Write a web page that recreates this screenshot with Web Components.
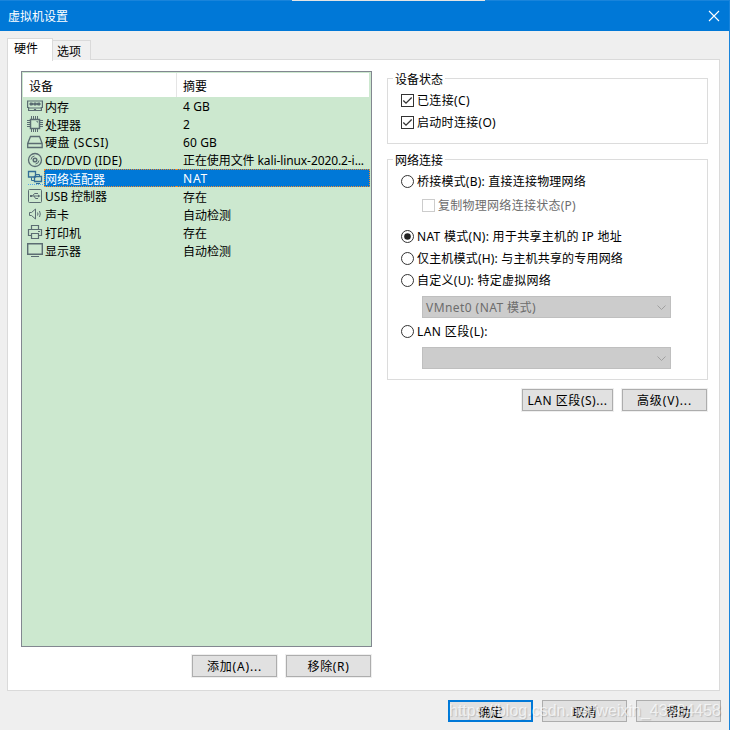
<!DOCTYPE html>
<html lang="zh-CN">
<head>
<meta charset="utf-8">
<title>虚拟机设置</title>
<style>
html,body{margin:0;padding:0}
body{width:730px;height:730px;overflow:hidden;font:12px/18px "Noto Sans","Noto Sans CJK SC",sans-serif;color:#000}
</style>
</head>
<body>
<vm-dialog></vm-dialog>
<script>
const define=(name,html,setup)=>{
  const t=document.createElement('template');
  t.innerHTML='<style>*{box-sizing:border-box}:host{box-sizing:border-box}</style>'+html;
  customElements.define(name,class extends HTMLElement{
    connectedCallback(){
      if(this.shadowRoot)return;
      this.attachShadow({mode:'open'}).append(t.content.cloneNode(true));
      if(setup)setup(this,this.shadowRoot);
    }
  });
};

// Label whose advance is spread over the width given in "w"; purely Chinese labels sit one pixel lower.
define('ui-text',`<style>:host{display:inline-block;white-space:pre;line-height:18px;flex:none}span{display:inline-block}.c{transform:translateY(1px)}</style><span><slot></slot></span>`,(el,r)=>{
  const w=+el.getAttribute('w'),s=r.querySelector('span'),n=el.textContent.length;
  if(!/[ -~]/.test(el.textContent))s.className='c';
  if(w)s.style.letterSpacing=((w-s.getBoundingClientRect().width)/n)+'px';
});

const ICONS={
  memory:'<path d="M.6 3h14.800v6.500h-1v3H8.500v-1H7.500v1H1.600v-3h-1z" stroke-width="1.200"/><path d="M3 5h2.500v2H3zM6.800 5h2.500v2H6.800zM10.500 5H13v2h-2.500z" fill="#5b6c72"/><path d="M2 10h12"/>',
  cpu:'<path d="M3.500 3.500h9v9h-9z" stroke-width="1.500"/><path d="M4.500 0v3m2-3v3m2-3v3m2-3v3M4.500 13v3m2-3v3m2-3v3m2-3v3M0 4.500h3m-3 2h3m-3 2h3m-3 2h3M13 4.500h3m-3 2h3m-3 2h3m-3 2h3"/><path d="M9.500 5.500h1v1"/>',
  disk:'<path d="M3.500 2.500h9l2.700 7v4H.7v-4zM1 9.500h14" stroke-width="1.300"/>',
  cd:'<circle cx="8" cy="8" r="6.500" stroke-width="1.300"/><circle cx="8" cy="8" r="1.800" stroke-width="1.500"/><path d="M4 7.500a4 4 0 0 1 3.500-3.500M12 8.500a4 4 0 0 1-3.500 3.500"/>',
  net:'<path d="M1.500 1.500h7v5.500h-7zM7.500 6.500h7v5h-7z" stroke="#326d96" stroke-width="1.300"/><path d="M4.500 7.500v3H7M9 4.500h3.500V6M9 13.500h4" stroke="#326d96"/><path d="M1 14.500h15" stroke="#58a8e8" stroke-dasharray="1 1"/>',
  usb:'<rect x="1.500" y="1.500" width="13" height="13" rx="1"/><path d="M3 8h9M5.500 8l2-2.500H10M7 8l1.500 2.500H10"/><path d="M11 6.500 13.500 8 11 9.500zM3 7h2v2H3zM10 5h1v1h-1zM9.500 10h1.500v1H9.500z" fill="#5b6c72" stroke="none"/>',
  sound:'<path d="M2.500 6.500h2L8.500 3v10l-4-3.500h-2zM10.500 6.500q1 1.500 0 3M12.500 5q1.500 3 0 6"/>',
  print:'<path d="M4.500 5.500v-4h7v4M4.500 11.500h-3v-6h13v6h-3M4.500 9.500h7v5h-7z" stroke-width="1.200"/><path d="M11 7.500h2"/>',
  display:'<path d="M.7 1.700h14.600v10.600H.7z" stroke-width="1.400"/><path d="M4 14.500h8"/>'
};
define('ui-icon',`<style>:host{display:block;width:16px;height:16px;flex:none}svg{display:block;fill:none;stroke:#5b6c72}</style><svg width="16" height="16" viewBox="0 0 16 16"></svg>`,(el,r)=>{
  r.querySelector('svg').innerHTML=ICONS[el.getAttribute('name')];
});

define('title-bar',`<style>
:host{display:flex;height:31px;background:#0078d7;color:#fff;justify-content:space-between;align-items:center;padding:0 10px 0 8px;
background-image:linear-gradient(#e4e4e4,#e4e4e4),linear-gradient(#1984db,#1984db);background-size:193px 1px,100% 1px;background-position:292px 0,0 0;background-repeat:no-repeat}
svg{display:block}</style><slot></slot><svg width="12" height="12" viewBox="0 0 12 12" fill="none" stroke="#fff" stroke-width="1.100"><path d="M1 1l10 10M11 1 1 11"/></svg>`);

define('ui-tabs',`<style>
:host{display:flex;align-items:flex-end;height:22px;margin-left:7px}
div{border:1px solid #dadada;border-bottom:0}
.a{width:46px;height:23px;background:#fff;padding:0 0 0 6px;margin-bottom:-1px;z-index:1}
.b{width:38px;height:20px;background:#f0f0f0;padding:1px 0 0 4px;border-left:0}
</style><div class="a"><ui-text w="24">硬件</ui-text></div><div class="b"><ui-text w="24">选项</ui-text></div>`);

define('ui-button',`<style>
:host{display:flex;height:22px;width:85px;flex:none;border:1px solid #adadad;background:#e1e1e1;align-items:center;justify-content:center;padding-top:1px;box-shadow:0 0 0 1px #efefef}
:host([primary]){border:2px solid #0078d7}
</style><slot></slot>`);

define('device-row',`<style>
:host{display:flex;height:18px}
.n{display:flex;width:153px;padding-left:4px;flex:none}
.l{flex:1;padding-left:2px;height:18px;display:flex;padding-top:1px}
.s{flex:1;padding:1px 0 0 7px}
ui-icon{margin-top:1px}
:host([selected]) .l,:host([selected]) .s{background:#0078d7;color:#fff;border:1px dotted #ef8a2b;padding-top:0}
:host([selected]) .l{border-right:0;padding-left:0;margin-left:1px}
:host([selected]) .s{border-left:0}
</style><div class="n"><ui-icon></ui-icon><div class="l"><slot name="name"></slot></div></div><div class="s"><slot></slot></div>`,(el,r)=>{
  const o=r.querySelector('ui-icon'),i=document.createElement('ui-icon');
  i.setAttribute('name',el.getAttribute('icon'));o.replaceWith(i);
});

define('device-list',`<style>
:host{display:block;width:351px;height:576px;border:1px solid #828790;background:#cce8cf;padding:1px}
.h{display:flex;height:24px;background:#fff;margin-right:1px}
.h div{padding:4px 0 0 6px}
.h .a{width:154px;border-right:1px solid #e5e5e5}
</style><div class="h"><div class="a"><ui-text w="24">设备</ui-text></div><div><ui-text w="24">摘要</ui-text></div></div><div class="rows"><slot></slot></div>`);

define('group-box',`<style>
:host{display:block;position:relative;border:1px solid #dcdcdc;width:321px}
.t{position:absolute;left:5px;top:-9px;background:#fff;padding:0 2px}
</style><div class="t"><slot name="title"></slot></div><slot></slot>`);

define('ui-option',`<style>
:host{display:flex;height:18px;align-items:flex-start}
svg{flex:none;display:block;margin:2px 3px 0 0}
:host([disabled]){color:#6d6d6d}
</style><svg width="13" height="13" viewBox="0 0 13 13" fill="none"></svg><slot></slot>`,(el,r)=>{
  const s=r.querySelector('svg'),c=el.hasAttribute('disabled')?'#ccc':'#333',on=el.hasAttribute('on');
  s.innerHTML=el.hasAttribute('radio')
   ?`<circle cx="6.500" cy="6.500" r="6" stroke="${c}" fill="#fff"/>`+(on?'<circle cx="6.500" cy="6.500" r="3.300" fill="#222"/>':'')
   :`<rect x=".5" y=".5" width="12" height="12" stroke="${c}" fill="#fff"/>`+(on?'<path d="M2.300 6.500 5 9.200 10.700 3.500" stroke="#333" stroke-width="1.300"/>':'');
});

define('ui-combo',`<style>
:host{display:flex;width:249px;height:22px;border:1px solid #bfbfbf;background:#ccc;color:#6d6d6d;align-items:center;justify-content:space-between;padding:2px 4px 0 3px}
svg{display:block;margin-left:auto;margin-top:-1px}
</style><slot></slot><svg width="9" height="6" viewBox="0 0 9 6" fill="none" stroke="#a0a0a0"><path d="M.5.500l4 4 4-4"/></svg>`);

define('vm-dialog',`<style>
:host{display:block;position:relative;width:730px;height:730px;background:#efefef;border-right:1px solid #1984db;overflow:hidden}
title-bar{margin-right:-1px}
ui-tabs{margin-top:7px;position:relative;z-index:1}
.page{display:flex;height:632px;margin:-1px 9px 0 7px;background:#fff;border:1px solid #dadada;padding:11px 11px 0 13px;gap:15px}
.lb,.rb,.foot{display:flex;justify-content:flex-end;gap:9px}
.lb{margin:8px 1px 0 0}
.right{padding-top:7px}
.g1{height:66px;margin-bottom:15px}
.g2{height:221px}
.rb{margin:9px 1px 0 0}
.foot{padding:9px 8px 0 0}
.wm{position:absolute;left:449px;top:700px;font:16px/22px "Liberation Sans",sans-serif;color:rgba(255,255,255,.68);text-shadow:1px 1px 1px rgba(0,0,0,.16)}
</style>
<title-bar><ui-text w="60">虚拟机设置</ui-text></title-bar>
<ui-tabs></ui-tabs>
<div class="page">
 <div>
  <device-list>
   <device-row icon="memory"><ui-text slot="name" w="24">内存</ui-text><ui-text w="27">4 GB</ui-text></device-row>
   <device-row icon="cpu"><ui-text slot="name" w="36">处理器</ui-text><ui-text>2</ui-text></device-row>
   <device-row icon="disk"><ui-text slot="name" w="64">硬盘 (SCSI)</ui-text><ui-text w="34">60 GB</ui-text></device-row>
   <device-row icon="cd"><ui-text slot="name" w="77">CD/DVD (IDE)</ui-text><ui-text w="181">正在使用文件 kali-linux-2020.2-i...</ui-text></device-row>
   <device-row icon="net" selected><ui-text slot="name" w="60">网络适配器</ui-text><ui-text w="25">NAT</ui-text></device-row>
   <device-row icon="usb"><ui-text slot="name" w="62">USB 控制器</ui-text><ui-text w="24">存在</ui-text></device-row>
   <device-row icon="sound"><ui-text slot="name" w="24">声卡</ui-text><ui-text w="48">自动检测</ui-text></device-row>
   <device-row icon="print"><ui-text slot="name" w="36">打印机</ui-text><ui-text w="24">存在</ui-text></device-row>
   <device-row icon="display"><ui-text slot="name" w="36">显示器</ui-text><ui-text w="48">自动检测</ui-text></device-row>
  </device-list>
  <div class="lb"><ui-button><ui-text w="55">添加(A)...</ui-text></ui-button><ui-button><ui-text w="42">移除(R)</ui-text></ui-button></div>
 </div>
 <div class="right">
  <group-box class="g1"><ui-text slot="title" w="48">设备状态</ui-text>
   <ui-option on style="margin:13px 0 0 13px"><ui-text w="53">已连接(C)</ui-text></ui-option>
   <ui-option on style="margin:4px 0 0 13px"><ui-text w="79">启动时连接(O)</ui-text></ui-option>
  </group-box>
  <group-box class="g2"><ui-text slot="title" w="48">网络连接</ui-text>
   <ui-option radio style="margin:13px 0 0 13px"><ui-text w="169">桥接模式(B): 直接连接物理网络</ui-text></ui-option>
   <ui-option disabled style="margin:6px 0 0 34px"><ui-text w="138">复制物理网络连接状态(P)</ui-text></ui-option>
   <ui-option radio on style="margin:13px 0 0 13px"><ui-text w="205">NAT 模式(N): 用于共享主机的 IP 地址</ui-text></ui-option>
   <ui-option radio style="margin:4px 0 0 13px"><ui-text w="206">仅主机模式(H): 与主机共享的专用网络</ui-text></ui-option>
   <ui-option radio style="margin:4px 0 0 13px"><ui-text w="134">自定义(U): 特定虚拟网络</ui-text></ui-option>
   <ui-combo style="margin:6px 0 0 34px"><ui-text w="110">VMnet0 (NAT 模式)</ui-text></ui-combo>
   <ui-option radio style="margin:5px 0 0 13px"><ui-text w="71">LAN 区段(L):</ui-text></ui-option>
   <ui-combo style="margin:6px 0 0 34px"></ui-combo>
  </group-box>
  <div class="rb"><ui-button style="width:91px"><ui-text w="80">LAN 区段(S)...</ui-text></ui-button><ui-button><ui-text w="55">高级(V)...</ui-text></ui-button></div>
 </div>
</div>
<div class="foot"><ui-button primary><ui-text w="24">确定</ui-text></ui-button><ui-button><ui-text w="24">取消</ui-text></ui-button><ui-button><ui-text w="24">帮助</ui-text></ui-button></div>
<div class="wm"><ui-text w="272">https://blog.csdn.net/weixin_43584458</ui-text></div>
`);
</script>
</body>
</html>
